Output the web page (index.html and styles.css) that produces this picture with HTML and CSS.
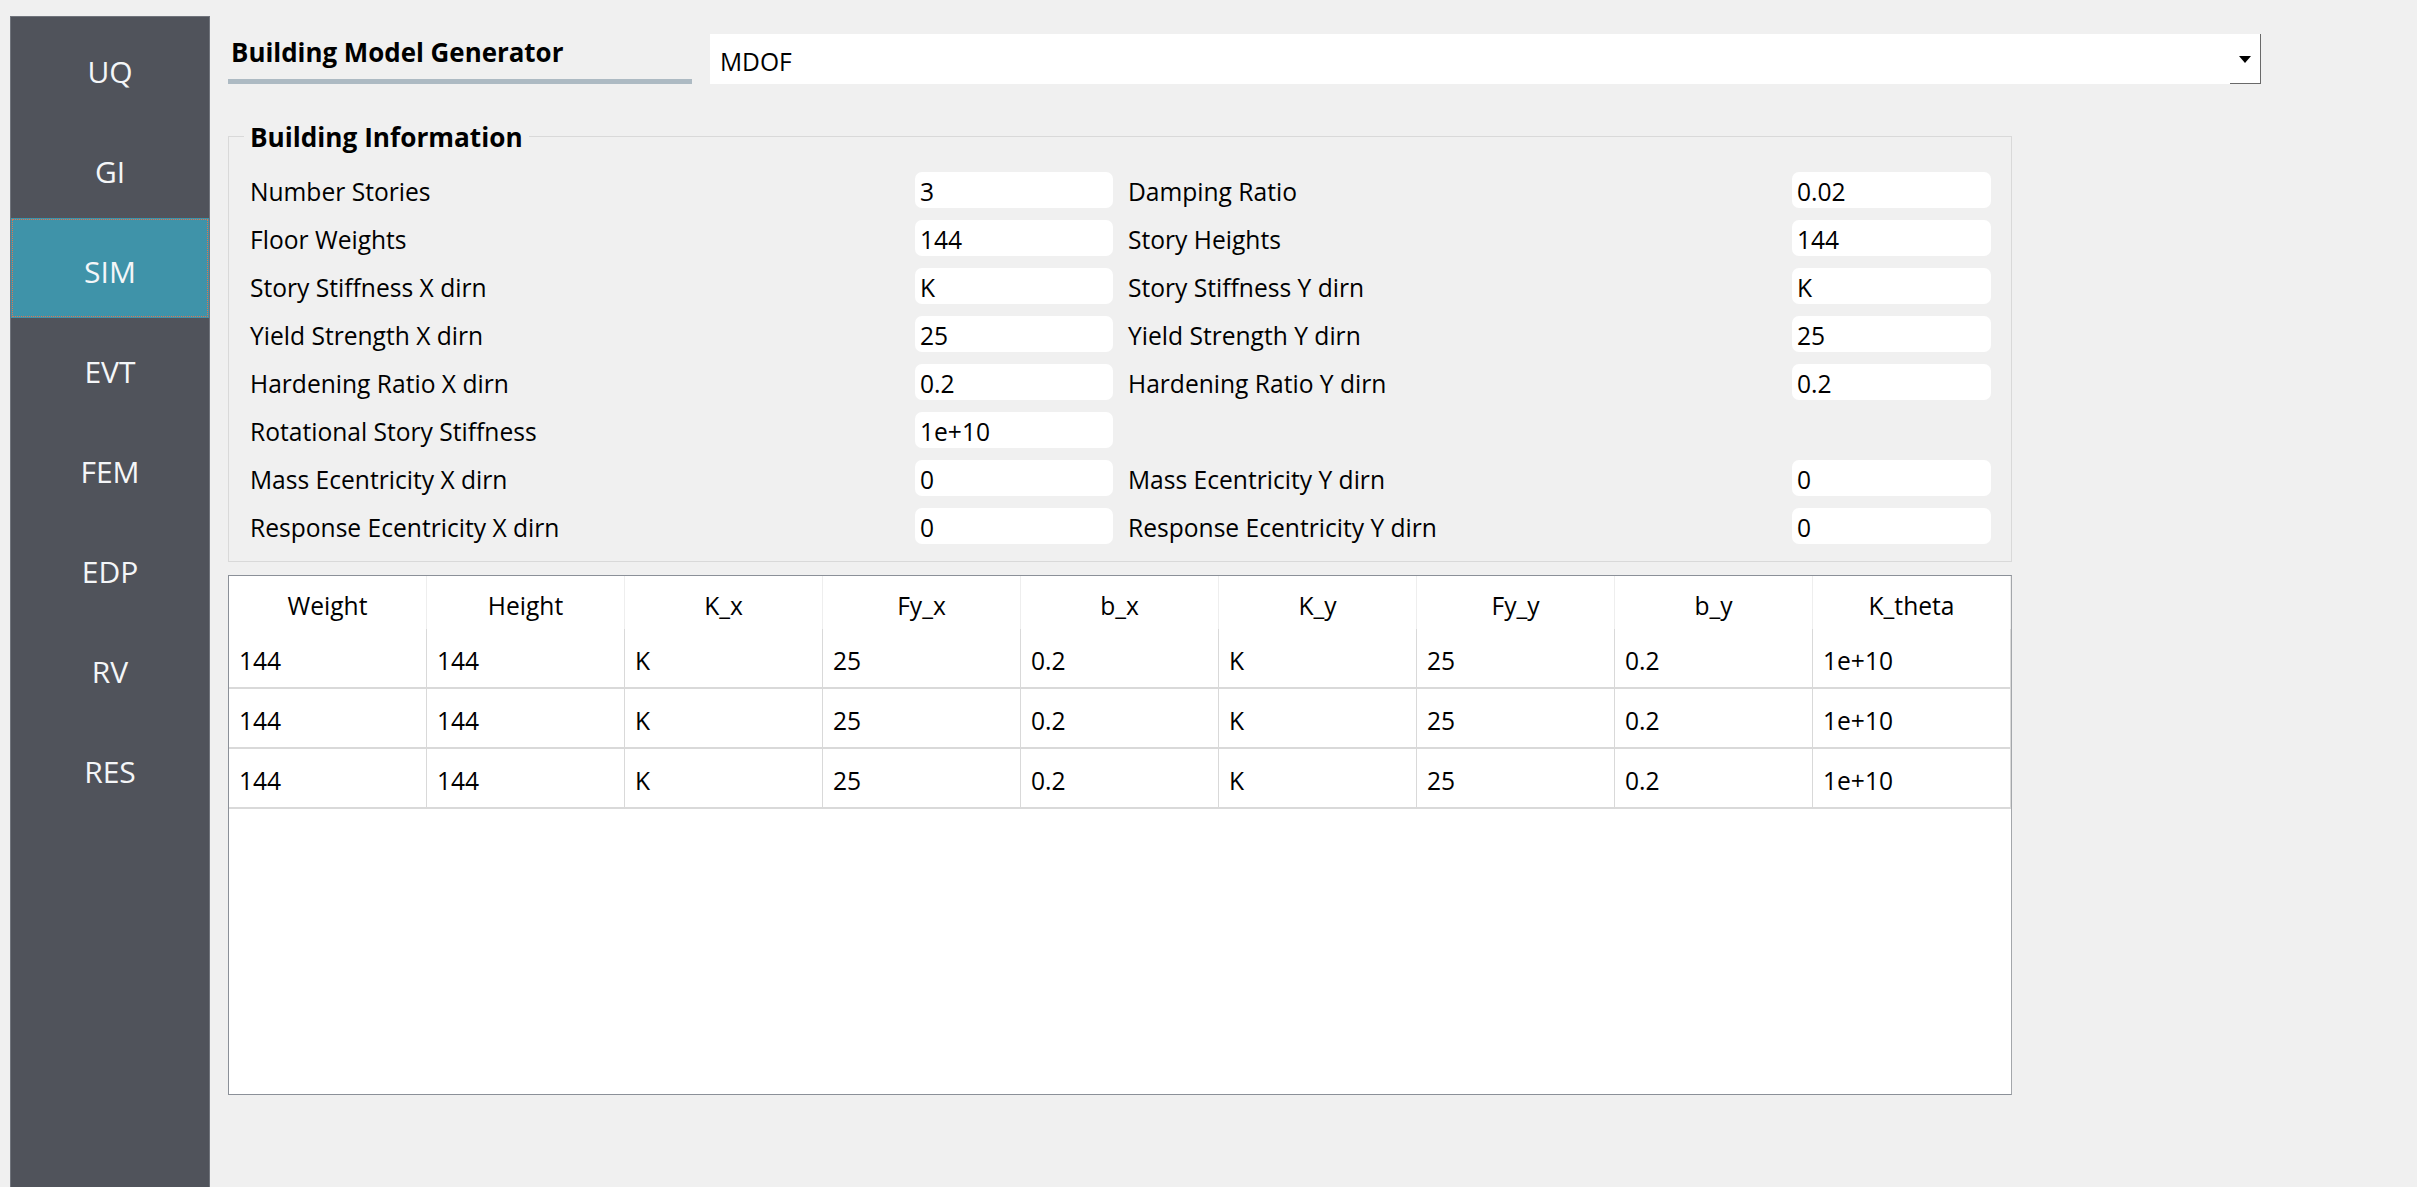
FILE: index.html
```html
<!DOCTYPE html>
<html lang="en">
<head>
<meta charset="utf-8">
<title>Building Model Generator</title>
<link rel="stylesheet" href="styles.css">
</head>
<body>
<div class="app">
  <nav class="sidebar">
    <div class="nav-item">UQ</div>
    <div class="nav-item">GI</div>
    <div class="nav-item active">SIM</div>
    <div class="nav-item">EVT</div>
    <div class="nav-item">FEM</div>
    <div class="nav-item">EDP</div>
    <div class="nav-item">RV</div>
    <div class="nav-item">RES</div>
  </nav>
  <main class="content">
    <div class="top-row">
      <div class="model-title">
        <div class="model-title-text">Building Model Generator</div>
        <div class="model-title-bar"></div>
      </div>
      <div class="combo">
        <span class="combo-text">MDOF</span>
        <span class="combo-button">
          <svg class="combo-arrow" width="12" height="7" viewBox="0 0 12 7"><polygon points="0,0 12,0 6,7" fill="#000"/></svg>
        </span>
      </div>
    </div>

    <section class="group">
      <div class="group-title">Building Information</div>
      <div class="form-grid">
        <div class="label">Number Stories</div><div class="input">3</div>
        <div class="label second">Damping Ratio</div><div class="input">0.02</div>

        <div class="label">Floor Weights</div><div class="input">144</div>
        <div class="label second">Story Heights</div><div class="input">144</div>

        <div class="label">Story Stiffness X dirn</div><div class="input">K</div>
        <div class="label second">Story Stiffness Y dirn</div><div class="input">K</div>

        <div class="label">Yield Strength X dirn</div><div class="input">25</div>
        <div class="label second">Yield Strength Y dirn</div><div class="input">25</div>

        <div class="label">Hardening Ratio X dirn</div><div class="input">0.2</div>
        <div class="label second">Hardening Ratio Y dirn</div><div class="input">0.2</div>

        <div class="label">Rotational Story Stiffness</div><div class="input">1e+10</div>
        <div class="label second"></div><div class="empty"></div>

        <div class="label">Mass Ecentricity X dirn</div><div class="input">0</div>
        <div class="label second">Mass Ecentricity Y dirn</div><div class="input">0</div>

        <div class="label">Response Ecentricity X dirn</div><div class="input">0</div>
        <div class="label second">Response Ecentricity Y dirn</div><div class="input">0</div>
      </div>
    </section>

    <div class="table">
      <div class="table-head">
        <div class="th">Weight</div>
        <div class="th">Height</div>
        <div class="th">K_x</div>
        <div class="th">Fy_x</div>
        <div class="th">b_x</div>
        <div class="th">K_y</div>
        <div class="th">Fy_y</div>
        <div class="th">b_y</div>
        <div class="th">K_theta</div>
      </div>
      <div class="table-row">
        <div class="td">144</div><div class="td">144</div><div class="td">K</div><div class="td">25</div><div class="td">0.2</div><div class="td">K</div><div class="td">25</div><div class="td">0.2</div><div class="td">1e+10</div>
      </div>
      <div class="table-row">
        <div class="td">144</div><div class="td">144</div><div class="td">K</div><div class="td">25</div><div class="td">0.2</div><div class="td">K</div><div class="td">25</div><div class="td">0.2</div><div class="td">1e+10</div>
      </div>
      <div class="table-row">
        <div class="td">144</div><div class="td">144</div><div class="td">K</div><div class="td">25</div><div class="td">0.2</div><div class="td">K</div><div class="td">25</div><div class="td">0.2</div><div class="td">1e+10</div>
      </div>
    </div>
  </main>
</div>
</body>
</html>
```

FILE: styles.css
```css
html, body {
  margin: 0;
  padding: 0;
}

body {
  background: #f0f0f0;
  font-family: "Open Sans", "Noto Sans", sans-serif;
  font-size: 24.6px;
  color: #000;
  overflow: hidden;
}

.app {
  display: flex;
  height: 1187px;
}

/* ---------- Sidebar ---------- */
.sidebar {
  box-sizing: border-box;
  width: 200px;
  margin: 16px 0 0 10px;
  padding-top: 1px;
  background: #50535b;
  border: 1px solid #70747c;
  border-bottom: none;
  flex-shrink: 0;
}

.nav-item {
  height: 100px;
  box-sizing: border-box;
  padding-top: 6px;
  display: flex;
  align-items: center;
  justify-content: center;
  color: #f4f6f8;
  font-size: 30px;
}

.nav-item.active {
  background: #3f93a9;
  outline: 1px dotted #e0744f;
  outline-offset: -2px;
}

/* ---------- Content ---------- */
.content {
  padding: 34px 0 0 18px;
}

.top-row {
  display: flex;
  align-items: flex-end;
}

.model-title {
  width: 464px;
}

.model-title-text {
  font-weight: 700;
  font-size: 25.9px;
  line-height: 35px;
  padding-left: 3px;
  white-space: nowrap;
}

.model-title-bar {
  height: 5px;
  margin-top: 9px;
  background: #adbac3;
}

.combo {
  margin-left: 18px;
  width: 1551px;
  height: 50px;
  background: #fff;
  display: flex;
  align-items: center;
}

.combo-text {
  flex: 1;
  padding: 4px 0 0 10px;
}

.combo-button {
  box-sizing: border-box;
  width: 31px;
  align-self: stretch;
  border-right: 1px solid #696969;
  border-bottom: 1px solid #696969;
  display: flex;
  align-items: center;
  justify-content: center;
}

.combo-arrow {
  display: block;
  margin-top: 1px;
}

/* ---------- Group box ---------- */
.group {
  box-sizing: border-box;
  width: 1784px;
  margin-top: 52px;
  border: 1px solid #d9d9d9;
  padding: 0 20px 17px 21px;
}

.group-title {
  display: table;
  margin: -18px 0 0 -6px;
  padding: 0 6px;
  background: #f0f0f0;
  font-weight: 700;
  font-size: 26.2px;
  line-height: 36px;
  white-space: nowrap;
}

.form-grid {
  margin-top: 17px;
  display: grid;
  grid-template-columns: 665px 198px 679px 199px;
  grid-auto-rows: 36px;
  row-gap: 12px;
}

.label {
  display: flex;
  align-items: center;
  padding-top: 3px;
  white-space: nowrap;
}

.label.second {
  padding-left: 15px;
}

.input {
  background: #fff;
  border-radius: 7px;
  padding: 3px 0 0 5px;
  display: flex;
  align-items: center;
}

/* ---------- Table ---------- */
.table {
  box-sizing: border-box;
  width: 1784px;
  height: 520px;
  margin-top: 13px;
  background: #fff;
  border: 1px solid #8b9098;
  border-right-color: #a4a7ab;
}

.table-head {
  display: grid;
  grid-template-columns: repeat(9, 1fr);
  height: 53px;
}

.th {
  display: flex;
  align-items: center;
  justify-content: center;
  padding-top: 6px;
  border-right: 1px solid #eeeeee;
}

.table-row {
  box-sizing: border-box;
  display: grid;
  grid-template-columns: repeat(9, 1fr);
  height: 60px;
  border-bottom: 2px solid #d9d9d9;
}

.td {
  display: flex;
  align-items: center;
  padding: 4px 0 0 10px;
  border-right: 1px solid #d9d9d9;
}
```
